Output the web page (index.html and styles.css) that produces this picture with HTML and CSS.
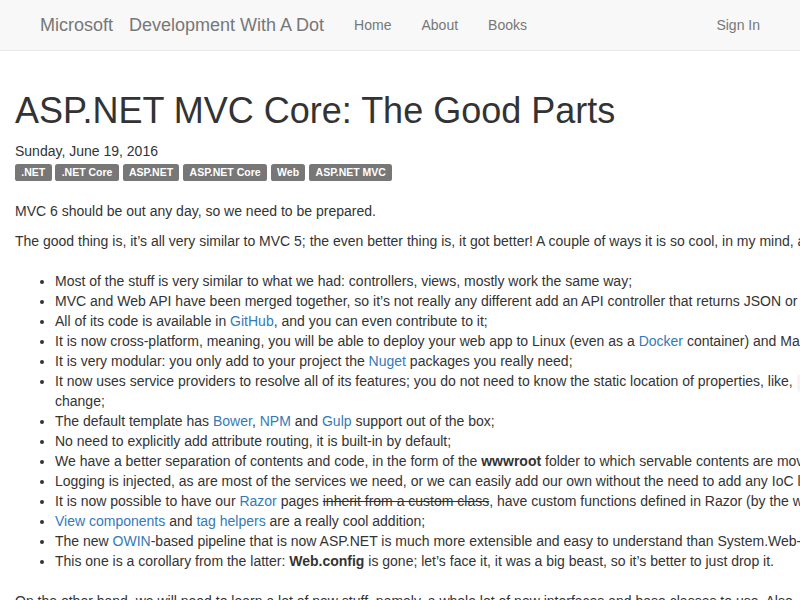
FILE: index.html
```html
<!DOCTYPE html>
<html lang="en">
<head>
<meta charset="utf-8">
<title>ASP.NET MVC Core: The Good Parts</title>
<link rel="stylesheet" href="styles.css">
</head>
<body>
<nav class="navbar">
  <div class="container">
    <div class="brand"><a href="#" class="brand-link">Microsoft</a><a href="#" class="brand-link brand-title">Development With A Dot</a></div>
    <ul class="nav">
      <li><a href="#">Home</a></li>
      <li><a href="#">About</a></li>
      <li><a href="#">Books</a></li>
    </ul>
    <ul class="nav nav-right">
      <li><a href="#">Sign In</a></li>
    </ul>
  </div>
</nav>
<main class="post">
  <h1 class="post-title">ASP.NET MVC Core: The Good Parts</h1>
  <div class="post-date">Sunday, June 19, 2016</div>
  <div class="tags"><span class="label">.NET</span> <span class="label">.NET Core</span> <span class="label">ASP.NET</span> <span class="label">ASP.NET Core</span> <span class="label">Web</span> <span class="label">ASP.NET MVC</span></div>
  <div class="post-body">
    <p>MVC 6 should be out any day, so we need to be prepared.</p>
    <p>The good thing is, it’s all very similar to MVC 5; the even better thing is, it got better! A couple of ways it is so cool, in my mind, are:</p>
    <ul>
      <li>Most of the stuff is very similar to what we had: controllers, views, mostly work the same way;</li>
      <li>MVC and Web API have been merged together, so it’s not really any different add an API controller that returns JSON or an MVC controller that returns HTML;</li>
      <li>All of its code is available in <a href="#">GitHub</a>, and you can even contribute to it;</li>
      <li>It is now cross-platform, meaning, you will be able to deploy your web app to Linux (even as a <a href="#">Docker</a> container) and MacOS;</li>
      <li>It is very modular: you only add to your project the <a href="#">Nuget</a> packages you really need;</li>
      <li>It now uses service providers to resolve all of its features; you do not need to know the static location of properties, like, <code>HttpContext.Current</code>, which is always subject to change;</li>
      <li>The default template has <a href="#">Bower</a>, <a href="#">NPM</a> and <a href="#">Gulp</a> support out of the box;</li>
      <li>No need to explicitly add attribute routing, it is built-in by default;</li>
      <li>We have a better separation of contents and code, in the form of the <strong>wwwroot</strong> folder to which servable contents are moved;</li>
      <li>Logging is injected, as are most of the services we need, or we can easily add our own without the need to add any IoC library;</li>
      <li>It is now possible to have our <a href="#">Razor</a> pages <del>inherit from a custom class</del>, have custom functions defined in Razor (by the way, this was possible before);</li>
      <li><a href="#">View components</a> and <a href="#">tag helpers</a> are a really cool addition;</li>
      <li>The new <a href="#">OWIN</a>-based pipeline that is now ASP.NET is much more extensible and easy to understand than System.Web-based one;</li>
      <li>This one is a corollary from the latter: <strong>Web.config</strong> is gone; let’s face it, it was a big beast, so it’s better to just drop it.</li>
    </ul>
    <p>On the other hand, we will need to learn a lot of new stuff, namely, a whole lot of new interfaces and base classes to use. Also, some things are gone.</p>
  </div>
</main>
</body>
</html>
```
FILE: styles.css
```css
html, body {
  margin: 0;
  overflow: hidden;
}
body {
  font-family: "Liberation Sans", Arial, Helvetica, sans-serif;
  font-size: 14px;
  line-height: 1.42857143;
  color: #333;
  background: #fff;
}
a {
  color: #337ab7;
  text-decoration: none;
}
.navbar {
  background: #f8f8f8;
  border-bottom: 1px solid #e7e7e7;
  min-height: 50px;
}
.container {
  width: 750px;
  margin: 0 auto;
  padding: 0 15px;
  box-sizing: border-box;
  display: flex;
}
.brand {
  display: flex;
  margin-left: -15px;
  padding: 15px;
}
.brand-link {
  color: #777;
  font-size: 18px;
  line-height: 20px;
}
.brand-title {
  margin-left: 16px;
}
.nav {
  list-style: none;
  margin: 0;
  padding: 0;
  display: flex;
}
.nav a {
  display: block;
  padding: 15px;
  line-height: 20px;
  color: #777;
}
.nav-right {
  margin-left: auto;
  margin-right: -15px;
}
.post {
  width: 1140px;
  padding: 40px 15px 0;
}
.post-title {
  font-size: 36px;
  font-weight: 500;
  line-height: 1.1;
  margin: 0 0 10px;
}
.post-date {
  line-height: 20px;
}
.tags {
  line-height: 20px;
  margin-bottom: 20px;
}
.label {
  display: inline;
  padding: .2em .6em .3em;
  font-size: 75%;
  font-weight: bold;
  line-height: 1;
  color: #fff;
  background: #777;
  border-radius: .25em;
  white-space: nowrap;
}
.post-body p {
  margin: 0 0 10px;
}
.post-body ul {
  margin: 20px 0;
  padding-left: 40px;
}
code {
  font-family: "Liberation Mono", Menlo, Consolas, monospace;
  font-size: 90%;
  line-height: 1;
  padding: 2px 4px;
  color: #c7254e;
  background: #f9f2f4;
  border-radius: 4px;
}
strong {
  font-weight: bold;
}
```
